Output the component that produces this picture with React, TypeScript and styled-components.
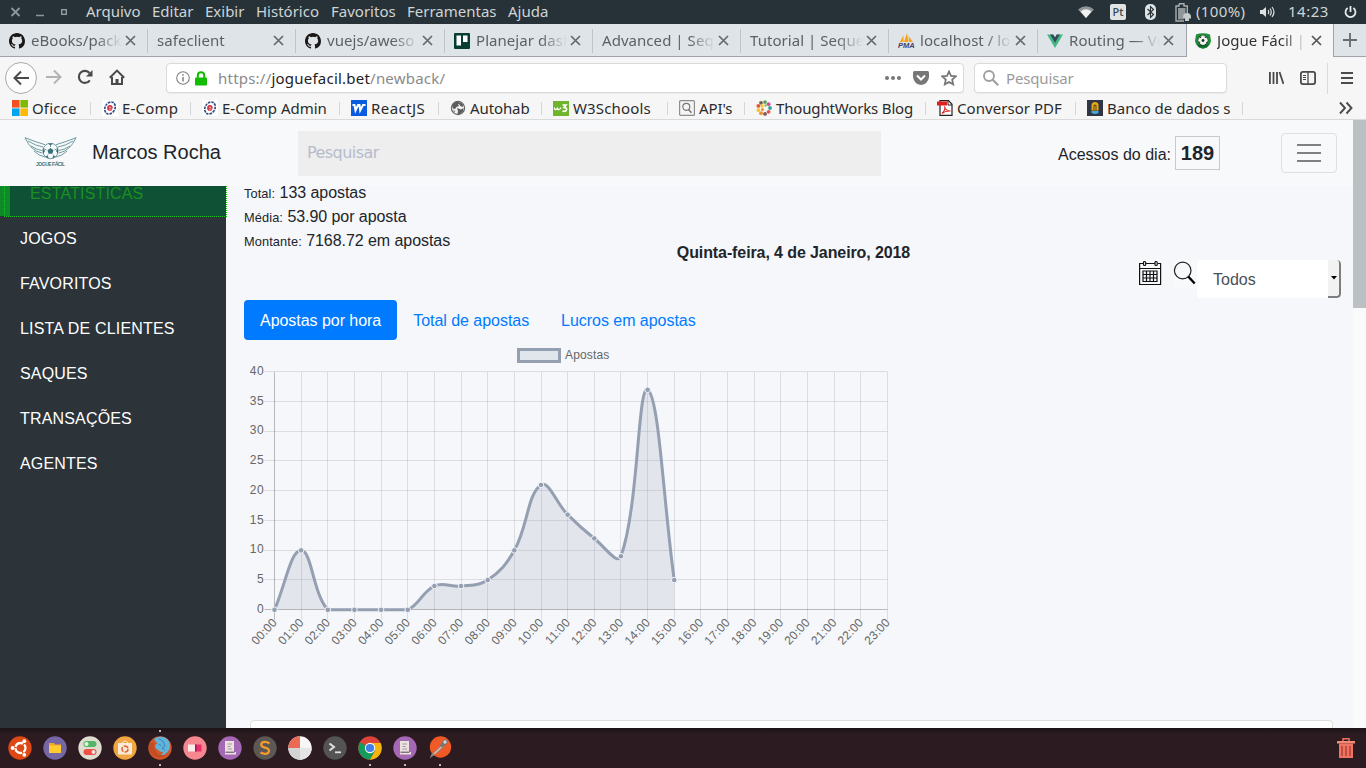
import React from 'react';
import styled, { createGlobalStyle, css } from 'styled-components';

const UI_FONT = '"Noto Sans", "Open Sans", sans-serif';
const PAGE_FONT = '"Liberation Sans", Arial, sans-serif';

const Global = createGlobalStyle`
  *, *::before, *::after { box-sizing: border-box; }
  html, body { margin: 0; padding: 0; overflow: hidden; }
  svg { display: block; flex: none; }
`;

const Screen = styled.div`
  width: 1366px;
  height: 768px;
  display: flex;
  flex-direction: column;
  overflow: hidden;
  background: #f5f7fb;
`;

/* ---------- desktop menu bar ---------- */

const MenuBar = styled.div`
  flex: none;
  height: 24px;
  display: flex;
  align-items: center;
  background: #263238;
  color: #cfd4d6;
  font: 15px/23px ${UI_FONT};
  white-space: nowrap;
`;
const WindowButtons = styled.div`
  width: 86px;
  padding-left: 10px;
`;
const MenuItem = styled.span<{ $w: number }>`
  width: ${p => p.$w}px;
  padding-bottom: 1px;
`;
const Tray = styled.div`
  margin-left: auto;
  display: flex;
  align-items: center;
  padding-right: 9px;
`;
const Gap = styled.div<{ $w: number }>`
  width: ${p => p.$w}px;
`;
const KeyboardBadge = styled.span`
  width: 16px;
  height: 16px;
  border-radius: 2px;
  background: #dfe3e4;
  color: #39464c;
  font: 500 11px/16px ${UI_FONT};
  text-align: center;
`;
const TrayText = styled.span<{ $w: number; $ls?: number }>`
  width: ${p => p.$w}px;
  padding-bottom: 1px;
  letter-spacing: ${p => p.$ls ?? 0}px;
`;

/* ---------- browser tabs ---------- */

const TabStrip = styled.div`
  flex: none;
  height: 33px;
  display: flex;
  background: #dfe4e8;
`;
const Tab = styled.div<{ $w: number; $active?: boolean; $last?: boolean }>`
  width: ${p => p.$w}px;
  height: 33px;
  display: flex;
  align-items: center;
  padding: 0 12px 0 9px;
  border-bottom: 1px solid #9ea4a9;
  color: #5d6163;
  font: 15px/32px ${UI_FONT};
  background: linear-gradient(#bfc4c8, #bfc4c8) no-repeat right 5px / 1px 24px;
  ${p => p.$last && css`background: none;`}
  ${p => p.$active && css`
    background: #f6f6f6;
    border: solid #9ea4a9;
    border-width: 0 1px;
    color: #333;
    padding: 0 11px 1px 8px;
  `}
`;
const Favicon = styled.span`
  width: 16px;
  height: 16px;
  margin: 1px 6px 0 0;
  flex: none;
`;
const TabTitle = styled.span`
  flex: 1;
  min-width: 0;
  height: 32px;
  margin-right: 3px;
  overflow: hidden;
  white-space: nowrap;
  letter-spacing: 0.05px;
  mask-image: linear-gradient(to left, transparent 0, #000 26px);
`;
const NewTab = styled.div`
  flex: 1;
  display: flex;
  align-items: center;
  padding-left: 9px;
  border-bottom: 1px solid #9ea4a9;
`;

/* ---------- toolbar ---------- */

const Toolbar = styled.div`
  flex: none;
  height: 40px;
  display: flex;
  align-items: center;
  background: #f6f6f6;
  font: 15px/28px ${UI_FONT};
`;
const BackButton = styled.div`
  width: 32px;
  height: 32px;
  margin: 2px 8px 0 5px;
  border: 1px solid #a9a9a9;
  border-radius: 50%;
  background: #fdfdfd;
  display: flex;
  align-items: center;
  justify-content: center;
`;
const Field = styled.div<{ $w: number; $ml: number }>`
  width: ${p => p.$w}px;
  margin: 2px 0 0 ${p => p.$ml}px;
  height: 30px;
  border: 1px solid #dadada;
  border-radius: 4px;
  background: #fff;
  box-shadow: 0 1px 1px rgba(0, 0, 0, 0.05);
  display: flex;
  align-items: center;
  color: #8a8a8a;
  white-space: nowrap;
`;
const Url = styled.span`
  flex: 1;
  margin-left: 11px;
  letter-spacing: 0.22px;
  b { font-weight: 400; color: #222; }
`;
const Placeholder = styled.span`
  margin-left: 7px;
  color: #9a9a9a;
  letter-spacing: -0.15px;
`;
const ToolIcons = styled.div`
  margin-left: auto;
  display: flex;
  align-items: center;
  height: 40px;
  padding: 2px 12px 0 0;
`;
const ToolDivider = styled.div`
  width: 1px;
  height: 31px;
  margin: 0 12px 0 10px;
  background: #dadada;
`;

/* ---------- bookmarks ---------- */

const Bookmarks = styled.div`
  flex: none;
  height: 23px;
  display: flex;
  align-items: center;
  padding-left: 12px;
  background: #f6f6f6;
  border-bottom: 1px solid #d9d9d9;
  color: #2b2b2b;
  font: 15px/22px ${UI_FONT};
`;
const Bookmark = styled.div<{ $w: number }>`
  width: ${p => p.$w}px;
  display: flex;
  align-items: center;
  white-space: nowrap;
`;
const BookmarkLabel = styled.span<{ $ls: number }>`
  margin-left: 4px;
  letter-spacing: ${p => p.$ls}px;
`;
const BookmarkRule = styled.span`
  width: 1px;
  height: 13px;
  margin-left: auto;
  margin-right: 11px;
  background: #d6d6d6;
`;
const Overflow = styled.div`
  margin-left: auto;
  padding-right: 13px;
`;

/* ---------- web page ---------- */

const Viewport = styled.div`
  flex: none;
  height: 608px;
  display: flex;
  overflow: hidden;
`;
const Page = styled.div`
  width: 1353px;
  height: 608px;
  display: flex;
  flex-direction: column;
  background: #f5f7fb;
  color: #212529;
  font: 16px/24px ${PAGE_FONT};
`;
const ScrollTrack = styled.div`
  flex: 1;
  background: #fafafa;
`;
const ScrollThumb = styled.div`
  height: 188px;
  background: #bbc0c3;
`;
const Header = styled.header`
  position: relative;
  z-index: 2;
  flex: none;
  height: 66px;
  display: flex;
  align-items: center;
  padding: 0 16px 0 24px;
  background: #f8f9fb;
`;
const UserName = styled.span`
  width: 206px;
  margin-left: 15px;
  padding-bottom: 2px;
  font-size: 20px;
`;
const SearchBox = styled.div`
  width: 583px;
  height: 45px;
  padding-left: 9px;
  background: #eee;
  color: #b6bccd;
  font: 16px/43px "DejaVu Sans", sans-serif;
  letter-spacing: -0.55px;
`;
const Visits = styled.div`
  display: flex;
  align-items: center;
  margin-left: auto;
  gap: 4px;
  padding-top: 3px;
`;
const VisitCount = styled.b`
  width: 45px;
  height: 34px;
  margin-top: -3px;
  border: 1px solid #c9cacc;
  font-size: 20px;
  line-height: 32px;
  text-align: center;
`;
const Burger = styled.div`
  width: 56px;
  height: 40px;
  margin-left: 61px;
  border: 1px solid #dfe0e2;
  border-radius: 4px;
  display: flex;
  flex-direction: column;
  align-items: center;
  justify-content: center;
  gap: 6px;
  i { width: 24px; height: 2px; background: #7f8082; }
`;
const Body = styled.div`
  flex: none;
  height: 542px;
  display: flex;
`;
const Sidebar = styled.nav`
  position: relative;
  z-index: 1;
  width: 226px;
  background: #2c343a;
`;
const SideList = styled.div`
  margin-top: -15px;
  letter-spacing: 0.17px;
`;
const SideItem = styled.div<{ $active?: boolean }>`
  height: 45px;
  padding-left: 20px;
  line-height: 45px;
  color: #fff;
  ${p => p.$active && css`
    position: relative;
    border-left: 10px solid #0f8a2b;
    background: #0f5135;
    color: #1a8f22;
    &::after {
      content: '';
      position: absolute;
      inset: 0 -1px -1px -6px;
      border: 1px dotted #16c916;
    }
  `}
`;
const Main = styled.main`
  flex: 1;
  height: 542px;
  overflow: hidden;
  padding: 0 10px 0 18px;
`;
const Stats = styled.div`
  margin-top: -5px;
`;
const Stat = styled.div`
  height: 24px;
  letter-spacing: -0.06px;
  small { font-size: 12.8px; line-height: 1; letter-spacing: 0.1px; }
`;
const DateLine = styled.div`
  height: 24px;
  margin-top: -13px;
  line-height: 26px;
  text-align: center;
  font-weight: 700;
  letter-spacing: -0.1px;
`;
const Filters = styled.div`
  display: flex;
  height: 38px;
  margin: -4px 2px 2px 0;
  justify-content: flex-end;
`;
const FilterIcon = styled.span<{ $mr: number }>`
  width: 24px;
  height: 29px;
  margin-right: ${p => p.$mr}px;
  background: #f8f9fb;
`;
const Select = styled.div`
  width: 144px;
  height: 38px;
  display: flex;
  background: #fff;
  border-radius: 4px;
  overflow: hidden;
  color: #495057;
  line-height: 40px;
  padding-left: 16px;
`;
const SelectArrow = styled.span`
  margin-left: auto;
  width: 13px;
  height: 38px;
  background: #f2f2f2;
  border: solid #7d7d7d;
  border-width: 0 2px 2px 0;
  border-radius: 0 4px 4px 0;
  display: flex;
  align-items: center;
  justify-content: center;
`;
const Pills = styled.div`
  display: flex;
  letter-spacing: -0.04px;
`;
const Pill = styled.div<{ $active?: boolean }>`
  height: 40px;
  padding: 0 16px;
  line-height: 42px;
  border-radius: 4px;
  color: ${p => (p.$active ? '#fff' : '#007bff')};
  background: ${p => (p.$active ? '#007bff' : 'transparent')};
`;
const ChartFrame = styled.div`
  height: 380px;
`;
const Card = styled.div`
  height: 60px;
  margin: 0 10px 0 6px;
  border: 1px solid #dcdddf;
  border-radius: 4px;
  background: #fff;
`;

/* ---------- dock ---------- */

const Dock = styled.div`
  flex: none;
  height: 40px;
  display: flex;
  align-items: center;
  gap: 11px;
  padding: 0 8px;
  background: linear-gradient(#1c1416, #2c1b20 6px);
`;
const DockItem = styled.div<{ $run?: boolean; $focus?: boolean }>`
  height: 40px;
  display: flex;
  align-items: center;
  background-repeat: no-repeat;
  background-image: ${p => {
    const dot = 'radial-gradient(circle, #bbb 0.8px, transparent 1.5px)';
    return p.$focus ? `${dot}, ${dot}` : p.$run ? dot : 'none';
  }};
  background-size: 4px 4px;
  background-position: ${p => (p.$focus ? '10px 35px, 10px 1px' : '10px 35px')};
`;
const DockEnd = styled.div`
  margin-left: auto;
`;

/* ---------- icons ---------- */

const Close = ({ c = '#66696b' }: { c?: string }) => (
  <svg width="11" height="11" viewBox="0 0 11 11">
    <path d="M1 1l9 9M10 1l-9 9" stroke={c} strokeWidth="1.7" fill="none" />
  </svg>
);

const GitHub = () => (
  <svg width="16" height="16" viewBox="0 0 16 16">
    <path
      fill="#1b1817"
      d="M8 0C3.58 0 0 3.58 0 8c0 3.54 2.29 6.53 5.47 7.59.4.07.55-.17.55-.38 0-.19-.01-.82-.01-1.49-2.01.37-2.53-.49-2.69-.94-.09-.23-.48-.94-.82-1.13-.28-.15-.68-.52-.01-.53.63-.01 1.08.58 1.23.82.72 1.21 1.87.87 2.33.66.07-.52.28-.87.51-1.07-1.78-.2-3.64-.89-3.64-3.95 0-.87.31-1.59.82-2.15-.08-.2-.36-1.02.08-2.12 0 0 .67-.21 2.2.82a7.4 7.4 0 0 1 4 0c1.53-1.04 2.2-.82 2.2-.82.44 1.1.16 1.92.08 2.12.51.56.82 1.27.82 2.15 0 3.07-1.87 3.75-3.65 3.95.29.25.54.73.54 1.48 0 1.07-.01 1.93-.01 2.2 0 .21.15.46.55.38A8.01 8.01 0 0 0 16 8c0-4.42-3.58-8-8-8z"
    />
  </svg>
);
const Trello = () => (
  <svg width="16" height="16" viewBox="0 0 16 16">
    <rect width="16" height="16" rx="1" fill="#083d33" />
    <rect x="2.5" y="2.5" width="4.5" height="10" fill="#fff" />
    <rect x="9" y="2.5" width="4.5" height="6.5" fill="#fff" />
  </svg>
);
const Pma = () => (
  <svg width="17" height="16" viewBox="0 0 17 16">
    <path d="M2 9L5.5 2v7zM6 9l3-9 1.5 9zM11 9l-.5-6L15 9z" fill="#f7a11c" />
    <text x="0" y="15" fontFamily="Liberation Sans" fontSize="7.5" fontWeight="700" fontStyle="italic" fill="#3c3f73">PMA</text>
  </svg>
);
const Vue = () => (
  <svg width="16" height="16" viewBox="0 0 16 16">
    <path d="M0 1.5h6.2L8 4.6l1.8-3.1H16L8 15z" fill="#41b883" />
    <path d="M3.2 1.5h3L8 4.6l1.8-3.1h3L8 9.8z" fill="#35495e" />
  </svg>
);
const Ball = () => (
  <svg width="16" height="16" viewBox="0 0 16 16">
    <path d="M1 1.5Q8-1 15 1.5L16 8q-1 6-8 8Q1 14 0 8z" fill="#1f8e3a" />
    <path d="M2 10.500q6 4 12 0l-2 4H4z" fill="#126428" />
    <circle cx="8" cy="7.300" r="5.300" fill="#14351f" />
    <circle cx="8" cy="7.300" r="4.700" fill="#f2f5f2" />
    <path d="M8 5.800l1.600 1.200-.6 1.800H7l-.6-1.800zM5 3.700l1.500-.7-.5 1.700-1.500.8zM9.500 2.900l2 1.300-.2 1-1.500-.7zM3.700 8l1.500 1.500v1.300L4.200 10zM10.700 11l.5-1.600L12.500 8.200 12 10z" fill="#17321f" />
  </svg>
);
const Windows = () => (
  <svg width="16" height="16" viewBox="0 0 16 16">
    <path d="M0 0h7.6v7.6H0z" fill="#f25022" />
    <path d="M8.4 0H16v7.6H8.400z" fill="#7fba00" />
    <path d="M0 8.4h7.600V16H0z" fill="#00a4ef" />
    <path d="M8.400 8.400H16V16H8.400z" fill="#ffb900" />
  </svg>
);
const EComp = () => (
  <svg width="16" height="16" viewBox="0 0 16 16">
    <rect width="16" height="16" fill="#fff" />
    <ellipse cx="8" cy="8" rx="4.900" ry="6.300" fill="none" stroke="#2a4b86" strokeWidth="1.600" strokeDasharray="2.500 .9" transform="rotate(30 8 8)" />
    <path d="M6 8.100h4q.2-2.300-1.900-2.300-2.200.1-2.300 2.300.2 2.200 2.300 2l1.800-.5" fill="none" stroke="#d02b38" strokeWidth="1.400" />
  </svg>
);
const WSquare = () => (
  <svg width="16" height="16" viewBox="0 0 16 16">
    <rect width="16" height="16" fill="#0a5be0" />
    <path d="M1.500 5h2l1 5.500L7 5h1.500l.7 5.500L12 5h2.500" fill="none" stroke="#fff" strokeWidth="2" />
  </svg>
);
const GlobeIcon = () => (
  <svg width="16" height="16" viewBox="0 0 16 16">
    <circle cx="8" cy="8" r="6.600" fill="#f1f1f1" stroke="#666" strokeWidth="1.200" />
    <path d="M2 6q1.500-4 6-4.500L10 3 8 4.500 9 6 6.500 7 5 9 3 8.500zM10 2l3.500 3-1 2-2-1-1.500-2zM7 8l4 1.500 2.500-1.500-.5 3.500-3 2.500H7.500L8 11zM3 10l2 1-.5 1.500z" fill="#5c5c5c" />
  </svg>
);
const W3 = () => (
  <svg width="16" height="15" viewBox="0 0 16 15">
    <rect width="16" height="15" fill="#6fb52c" />
    <path d="M1.300 6.500q.3 2.500 1.800 2t1.400-2q.2 2.500 1.700 2T7.800 6.500" fill="none" stroke="#fff" strokeWidth="1.300" />
    <path d="M9.500 4H13l-2 2.500q3 0 2.500 2.500-.8 2-4 1" fill="none" stroke="#fff" strokeWidth="1.700" />
  </svg>
);
const ApiIcon = () => (
  <svg width="16" height="16" viewBox="0 0 16 16">
    <rect x=".6" y=".6" width="14.800" height="14.800" rx="1" fill="#f5f5f5" stroke="#8d8d8d" strokeWidth="1.200" />
    <circle cx="7.300" cy="6.800" r="3.500" fill="none" stroke="#777" strokeWidth="1.200" />
    <path d="M9.500 9.500l3 3.200" stroke="#777" strokeWidth="1.600" />
  </svg>
);
const Thought = () => (
  <svg width="16" height="16" viewBox="0 0 16 16">
    {['#2fa39a', '#e0564a', '#7c5b4c', '#f08c2e', '#f3c42e', '#e8543f', '#7c5b4c', '#54a85b', '#d64a9a'].map((c, i) => {
      const a = (i / 9) * Math.PI * 2;
      return <circle key={i} cx={8 + Math.cos(a) * 6} cy={8 + Math.sin(a) * 6} r="1.900" fill={c} />;
    })}
    <circle cx="6" cy="6" r="1.700" fill="#f3c42e" />
    <circle cx="9.500" cy="5.500" r="1.200" fill="#8bc34a" />
    <circle cx="6.500" cy="9.500" r="1.500" fill="#ef8a3a" />
  </svg>
);
const Pdf = () => (
  <svg width="16" height="16" viewBox="0 0 16 16">
    <path d="M3 .7h8.500l3.500 3.600v11H3z" fill="#fff" stroke="#222" strokeWidth="1.200" />
    <path d="M11 .7V5h4" fill="none" stroke="#222" />
    <rect y="1.500" width="10" height="4" fill="#e01f1f" />
    <path d="M5 13.500q4-4 2.500-7 1 4.500 6 4.500-5-.5-8.500 2.500z" fill="none" stroke="#d22" strokeWidth="1.100" />
  </svg>
);
const Bank = () => (
  <svg width="16" height="16" viewBox="0 0 16 16">
    <rect width="16" height="16" fill="#2f3747" />
    <path d="M4.500 10.500V5.500q0-3.500 3.500-3.500t3.500 3.500v5z" fill="#e8a913" />
    <path d="M6.500 10.500V5.500q1.500-2 3 0v5h-1V6h-1v4.500z" fill="#5b4a21" />
    <path d="M4.500 11h7v2q-3.500 2-7 0z" fill="#4aa6d8" />
  </svg>
);

/* ---------- chart ---------- */

const HOURS = Array.from({ length: 24 }, (_, i) => `${String(i).padStart(2, '0')}:00`);
const BETS = [0, 10, 0, 0, 0, 0, 4, 4, 5, 10, 21, 16, 12, 9, 37, 5];
const LEFT = 30.5;
const TOP = 32;
const BOTTOM = 269.8;
const STEP = 26.65;
const px = (i: number) => LEFT + i * STEP;
const py = (v: number) => BOTTOM - (v * (BOTTOM - TOP)) / 40;
const snap = (n: number) => Math.floor(n) + 0.5;

function smoothPath() {
  const pts = BETS.map((v, i) => ({ x: px(i), y: py(v) }));
  const cap = (y: number) => Math.min(BOTTOM, Math.max(TOP, y));
  const ctrl = pts.map((p, i) => {
    const a = pts[i - 1] ?? p;
    const b = pts[i + 1] ?? p;
    const d0 = Math.hypot(p.x - a.x, p.y - a.y);
    const d1 = Math.hypot(b.x - p.x, b.y - p.y);
    const f0 = (0.4 * d0) / (d0 + d1);
    const f1 = (0.4 * d1) / (d0 + d1);
    return {
      px: p.x - f0 * (b.x - a.x),
      py: cap(p.y - f0 * (b.y - a.y)),
      nx: p.x + f1 * (b.x - a.x),
      ny: cap(p.y + f1 * (b.y - a.y)),
    };
  });
  let d = `M${pts[0].x} ${pts[0].y}`;
  for (let i = 1; i < pts.length; i++) {
    d += `C${ctrl[i - 1].nx} ${ctrl[i - 1].ny} ${ctrl[i].px} ${ctrl[i].py} ${pts[i].x} ${pts[i].y}`;
  }
  return d;
}

const ChartText = styled.text<{ $ls?: number }>`
  font: 12px ${PAGE_FONT};
  letter-spacing: ${p => p.$ls ?? 0}px;
  fill: #666;
`;

function Chart() {
  const line = smoothPath();
  return (
    <svg width="660" height="320" viewBox="0 0 660 320">
      <rect x="274.500" y="9.500" width="41" height="12" fill="#e1e5ec" stroke="#949fb1" strokeWidth="3" />
      <ChartText x="321" y="19" $ls={0.15}>Apostas</ChartText>
      {HOURS.map((h, i) => (
        <g key={h}>
          <line x1={snap(px(i))} x2={snap(px(i))} y1={TOP} y2={BOTTOM + 10} stroke="#000" strokeOpacity={i ? 0.1 : 0.25} />
          <ChartText $ls={0.2} textAnchor="end" transform={`translate(${px(i) - 1.9} ${BOTTOM + 8.3}) rotate(-47)`} x="0" y="7">{h}</ChartText>
        </g>
      ))}
      {[0, 5, 10, 15, 20, 25, 30, 35, 40].map(v => (
        <g key={v}>
          <line x1={LEFT - 10} x2={px(23)} y1={snap(py(v) - 0.3)} y2={snap(py(v) - 0.3)} stroke="#000" strokeOpacity={v ? 0.1 : 0.25} />
          <ChartText $ls={0.4} textAnchor="end" x="20" y={py(v) + 3}>{v}</ChartText>
        </g>
      ))}
      <path d={`${line}V${BOTTOM}H${LEFT}Z`} fill="#949fb1" fillOpacity="0.2" />
      <path d={line} fill="none" stroke="#949fb1" strokeWidth="3" />
      {BETS.map((v, i) => (
        <circle key={i} cx={px(i)} cy={py(v)} r="2.800" fill="#949fb1" stroke="#f4f6fa" strokeWidth="1" />
      ))}
    </svg>
  );
}

/* ---------- dock drawings ---------- */

const Disc = ({ fill, children }: { fill: string; children?: React.ReactNode }) => (
  <svg width="24" height="24" viewBox="0 0 24 24">
    <circle cx="12" cy="12" r="11.700" fill={fill} />
    {children}
  </svg>
);
const Script = () => (
  <Disc fill="#a468b5">
    <path d="M7 5h9v11h2v2.500H7z" fill="#e9e3dc" />
    <path d="M9.500 8h4.500M9.500 10.500h3M9.500 13h4.500" stroke="#a596a5" strokeWidth="1.200" />
    <path d="M7.500 16.200h9" stroke="#5e3c68" />
  </Disc>
);

const DOCK: { run?: boolean; focus?: boolean; icon: React.ReactNode }[] = [
  { icon: (
    <Disc fill="#dd4814">
      <circle cx="12.500" cy="12" r="5" fill="none" stroke="#fff" strokeWidth="2.300" strokeDasharray="9.200 1.270" strokeDashoffset="4.500" />
      <circle cx="4.600" cy="12" r="1.900" fill="#fff" /><circle cx="16.300" cy="5.200" r="1.900" fill="#fff" /><circle cx="16.300" cy="18.800" r="1.900" fill="#fff" />
    </Disc>) },
  { icon: (
    <Disc fill="#7467a3">
      <path d="M6 7h5l1 1.500h6V17H6z" fill="#f0a92a" /><path d="M6 9.500h12V17H6z" fill="#ffcb2f" />
    </Disc>) },
  { icon: (
    <Disc fill="#deddcf">
      <rect x="5.500" y="5" width="13" height="6" rx="3" fill="#54b567" /><circle cx="8.500" cy="8" r="2" fill="#e9f1e4" />
      <rect x="5.500" y="13" width="13" height="6" rx="3" fill="#ee5046" /><circle cx="15.500" cy="16" r="2" fill="#f7e3dc" />
    </Disc>) },
  { icon: (
    <Disc fill="#f2a640">
      <path d="M5 7h14v11.500H5z" fill="#f8ead8" /><path d="M9 7q3-4 6 0" fill="none" stroke="#f8ead8" />
      <circle cx="12" cy="13" r="3" fill="none" stroke="#e0622d" strokeWidth="1.500" strokeDasharray="5 1.280" />
    </Disc>) },
  { focus: true, icon: (
    <Disc fill="#d2572b">
      <path d="M6 3Q9 .3 14 .8q7 1.200 8 8 0 6-4 8.500-3 3-8 3 5-2 5-4.500-4 .5-5-2-3-1-3-4 1-2 2.500-2Q8 6 6 3z" fill="#62b5da" />
      <path d="M11 3l4 2 2 5-3 2 3 2M10.500 8.500l3 1" fill="none" stroke="#3a86b8" strokeWidth="1" />
      <path d="M1 8q-1 8 5 12 7 4 12-1-8 1-10-3Q6 11 6 7 3 6 1 8z" fill="#c44c22" />
    </Disc>) },
  { icon: (
    <Disc fill="#f58790">
      <path d="M5 8.500h7v7H5z" fill="#f7ecea" /><path d="M12 8.500h6.500v7H12z" fill="#ea2c6d" /><path d="M12 8.500h1.500v7H12z" fill="#9b1e4b" />
    </Disc>) },
  { icon: <Script /> },
  { icon: (
    <Disc fill="#5c5853">
      <path d="M16.500 7.500Q12 4.500 8.700 7q-1.400 3.300 2.300 4.300l2.500.8q3.600 1.300 2 4.500-3.200 2.500-8 0" fill="none" stroke="#f79a2c" strokeWidth="2.300" />
    </Disc>) },
  { icon: (
    <Disc fill="#f6f6f6">
      <path d="M12 12V.3A11.700 11.700 0 0 0 .3 12z" fill="#ec6a53" /><path d="M12 12H.3A11.700 11.700 0 0 0 12 23.700z" fill="#d3d3d3" />
      <path d="M12 12v11.700A11.700 11.700 0 0 0 23.700 12z" fill="#e5e5e5" />
    </Disc>) },
  { icon: (
    <Disc fill="#545454">
      <path d="M6.500 7.500L11 11l-4.500 3.500" fill="none" stroke="#e0e0e0" strokeWidth="2" /><path d="M12 16.300h6" stroke="#e0e0e0" strokeWidth="1.800" />
    </Disc>) },
  { run: true, icon: (
    <Disc fill="#dc4437">
      <path d="M12 12L1.900 6.200A11.700 11.700 0 0 0 12 23.700l5-8.700z" fill="#149c5a" />
      <path d="M12 7h10.600A11.700 11.700 0 0 1 12 23.700l5-9z" fill="#f4b60d" />
      <circle cx="12" cy="12" r="5.200" fill="#f4f4f4" /><circle cx="12" cy="12" r="4.100" fill="#3f7fe8" />
    </Disc>) },
  { run: true, icon: <Script /> },
  { run: true, icon: (
    <svg width="24" height="24" viewBox="0 0 24 24">
      <circle cx="12.500" cy="11" r="10.700" fill="#f15a24" />
      <path d="M1.500 22.500l2-4.500 10-9 3 2-10 8z" fill="#8f8480" />
      <path d="M6 18l8-7.500" stroke="#e8b8a0" strokeWidth="1.500" fill="none" />
      <path d="M13 10.500l4-4" stroke="#777" strokeWidth="3.500" />
      <circle cx="17" cy="6" r="2.300" fill="#d5d5d5" stroke="#6c6c6c" />
    </svg>) },
];

/* ---------- data ---------- */

const MENU: [string, number][] = [
  ['Arquivo', 66], ['Editar', 53], ['Exibir', 51], ['Histórico', 75], ['Favoritos', 76], ['Ferramentas', 101], ['Ajuda', 60],
];
const TABS: { t: string; w: number; icon?: React.ReactNode }[] = [
  { t: 'eBooks/pack', w: 148, icon: <GitHub /> },
  { t: 'safeclient', w: 148 },
  { t: 'vuejs/aweso', w: 149, icon: <GitHub /> },
  { t: 'Planejar dash', w: 148, icon: <Trello /> },
  { t: 'Advanced | Sequ', w: 148 },
  { t: 'Tutorial | Seque', w: 148 },
  { t: 'localhost / lo', w: 149, icon: <Pma /> },
  { t: 'Routing — Vu', w: 148, icon: <Vue /> },
];
const MARKS: [string, number, number, React.ReactNode][] = [
  ['Oficce', 90, 0.15, <Windows />],
  ['E-Comp', 100, 0.2, <EComp />],
  ['E-Comp Admin', 149, 0, <EComp />],
  ['ReactJS', 99, 0.45, <WSquare />],
  ['Autohab', 103, -0.1, <GlobeIcon />],
  ['W3Schools', 126, 0.15, <W3 />],
  ["API's", 77, -0.1, <ApiIcon />],
  ['ThoughtWorks Blog', 181, -0.16, <Thought />],
  ['Conversor PDF', 150, 0.05, <Pdf />],
  ['Banco de dados s', 167, 0, <Bank />],
];
const SIDE = ['JOGOS', 'FAVORITOS', 'LISTA DE CLIENTES', 'SAQUES', 'TRANSAÇÕES', 'AGENTES'];

export default function App() {
  return (
    <Screen>
      <Global />
      <MenuBar>
        <WindowButtons>
          <svg width="60" height="14" viewBox="0 0 60 14">
            <path d="M1.500 3l8 8M9.500 3l-8 8" stroke="#8f979a" strokeWidth="1.800" />
            <path d="M26 10.500h8" stroke="#8f979a" strokeWidth="1.500" />
            <rect x="51.700" y="4.700" width="4.600" height="4.600" fill="none" stroke="#8f979a" strokeWidth="1.500" />
          </svg>
        </WindowButtons>
        {MENU.map(([t, w]) => <MenuItem key={t} $w={w}>{t}</MenuItem>)}
        <Tray>
          <svg width="16" height="12" viewBox="0 0 16 12"><path d="M0 3.500Q8-3 16 3.500L8 12z" fill="#8d9598" /><path d="M2.500 5.500Q8 1 13.500 5.500L8 12z" fill="#f0f2f2" /></svg>
          <Gap $w={16} />
          <KeyboardBadge>Pt</KeyboardBadge>
          <Gap $w={19} />
          <svg width="11" height="16" viewBox="0 0 11 16"><rect width="11" height="16" rx="5" fill="#dfe3e4" /><path d="M2.500 5l6 5.500-3 3v-11l3 3-6 5.500" fill="none" stroke="#263238" strokeWidth="1.100" /></svg>
          <Gap $w={19} />
          <svg width="17" height="19" viewBox="0 0 17 19"><path d="M4 .8h5V3h3.300v7M9 18H1V3h3V.8" fill="none" stroke="#a9b0b2" strokeWidth="1.400" /><path d="M3 5h7.500v7l-2 1v3.500H3z" fill="#8f979a" /><path d="M8 14q0-4 4-4t4 4v1.500h-2V18h-4v-2.500H8z" fill="#c6cbcc" /></svg>
          <Gap $w={4} />
          <TrayText $w={64} $ls={0.35}>(100%)</TrayText>
          <svg width="15" height="12" viewBox="0 0 15 12"><path d="M0 4h2.500L6 1v10L2.500 8H0z" fill="#dfe3e4" /><path d="M8 4q1.500 2 0 4M10 2.500q2.500 3.500 0 7M12 1q4 5 0 10" fill="none" stroke="#dfe3e4" strokeWidth="1.200" /></svg>
          <Gap $w={13} />
          <TrayText $w={56} $ls={0.5}>14:23</TrayText>
          <svg width="13" height="14" viewBox="0 0 13 14"><path d="M3.700 3a5 5 0 1 0 5.600 0M6.500 1v6" fill="none" stroke="#e6e9ea" strokeWidth="1.800" /></svg>
        </Tray>
      </MenuBar>

      <TabStrip>
        {TABS.map((t, i) => (
          <Tab key={i} $w={t.w} $last={i === TABS.length - 1}>
            {t.icon && <Favicon>{t.icon}</Favicon>}
            <TabTitle>{t.t}</TabTitle>
            <Close />
          </Tab>
        ))}
        <Tab $w={148} $active>
          <Favicon><Ball /></Favicon>
          <TabTitle>Jogue Fácil |</TabTitle>
          <Close c="#555" />
        </Tab>
        <NewTab>
          <svg width="14" height="14" viewBox="0 0 14 14"><path d="M7 0v14M0 7h14" stroke="#666b6f" strokeWidth="1.800" /></svg>
        </NewTab>
      </TabStrip>

      <Toolbar>
        <BackButton>
          <svg width="17" height="16" viewBox="0 0 17 16"><path d="M8 1.500L1.500 8 8 14.500M1.500 8H16" fill="none" stroke="#4a4a4a" strokeWidth="2" /></svg>
        </BackButton>
        <svg width="17" height="16" viewBox="0 0 17 16"><path d="M9 1.500L15.500 8 9 14.500M15.500 8H1" fill="none" stroke="#b3b3b3" strokeWidth="2" /></svg>
        <Gap $w={15} />
        <svg width="16" height="16" viewBox="0 0 16 16"><path d="M12.800 11.300A6 6 0 1 1 12.500 4" fill="none" stroke="#4a4a4a" strokeWidth="2.100" /><path d="M15.500 1v6.500H9z" fill="#4a4a4a" /></svg>
        <Gap $w={16} />
        <svg width="16" height="16" viewBox="0 0 16 16"><path d="M.8 8.800L8 1.600l7.200 7.200M3 8v7h10V8" fill="none" stroke="#4a4a4a" strokeWidth="2" /><path d="M6.500 15v-5h3v5" fill="#4a4a4a" /></svg>
        <Field $w={798} $ml={41}>
          <Gap $w={9} />
          <svg width="14" height="14" viewBox="0 0 14 14"><circle cx="7" cy="7" r="6.300" fill="none" stroke="#808080" strokeWidth="1.100" /><path d="M7 6v4.500M7 3.300v1.400" stroke="#808080" strokeWidth="1.500" /></svg>
          <Gap $w={5} />
          <svg width="12" height="15" viewBox="0 0 12 15"><path d="M2.800 8V4.500q0-3.200 3.200-3.200t3.200 3.200V8" fill="none" stroke="#12bc00" strokeWidth="2" /><rect y="6.500" width="12" height="8" rx="1" fill="#12bc00" /></svg>
          <Url>https://<b>joguefacil.bet</b>/newback/</Url>
          <svg width="16" height="6" viewBox="0 0 16 6"><circle cx="2" cy="3" r="2" fill="#777" /><circle cx="8" cy="3" r="2" fill="#777" /><circle cx="14" cy="3" r="2" fill="#777" /></svg>
          <Gap $w={12} />
          <svg width="16" height="14" viewBox="0 0 16 14"><path d="M1.500 0h13Q16 0 16 1.500V6q-1 7-8 8-7-1-8-8V1.500Q0 0 1.500 0z" fill="#777" /><path d="M4 4.500l4 4 4-4" fill="none" stroke="#fff" strokeWidth="2" /></svg>
          <Gap $w={12} />
          <svg width="16" height="16" viewBox="0 0 16 16"><path d="M8 1.500l2 4.400 4.800.5-3.600 3.200 1 4.800L8 12l-4.200 2.400 1-4.800L1.200 6.400 6 5.900z" fill="none" stroke="#777" strokeWidth="1.800" /></svg>
          <Gap $w={6} />
        </Field>
        <Field $w={253} $ml={10}>
          <Gap $w={8} />
          <svg width="16" height="16" viewBox="0 0 16 16"><circle cx="6" cy="6" r="5" fill="none" stroke="#a0a0a0" strokeWidth="1.900" /><path d="M9.700 9.700l5.500 5.500" stroke="#a0a0a0" strokeWidth="2.200" /></svg>
          <Placeholder>Pesquisar</Placeholder>
        </Field>
        <ToolIcons>
          <svg width="16" height="14" viewBox="0 0 16 14"><path d="M1.900 1v12M5.500 1v12M9 1v12M11.500 1l4 12" stroke="#4a4a4a" strokeWidth="1.800" /></svg>
          <Gap $w={16} />
          <svg width="16" height="14" viewBox="0 0 16 14"><rect x=".9" y=".9" width="14.200" height="12.200" rx="2" fill="none" stroke="#4a4a4a" strokeWidth="1.800" /><path d="M8 1v12" stroke="#4a4a4a" strokeWidth="1.300" /><path d="M3 4.500h3M3 6.500h3M3 8.500h3" stroke="#4a4a4a" /></svg>
          <Gap $w={1} />
          <ToolDivider />
          <svg width="14" height="14" viewBox="0 0 14 14"><path d="M1 2h12M1 7h12M1 12h12" stroke="#4a4a4a" strokeWidth="1.800" /></svg>
        </ToolIcons>
      </Toolbar>

      <Bookmarks>
        {MARKS.map(([t, w, ls, icon]) => (
          <Bookmark key={t} $w={w}>
            {icon}
            <BookmarkLabel $ls={ls}>{t}</BookmarkLabel>
            <BookmarkRule />
          </Bookmark>
        ))}
        <Overflow>
          <svg width="14" height="14" viewBox="0 0 14 14"><path d="M1 1.500L6 7l-5 5.500M7.500 1.500l5 5.500-5 5.500" fill="none" stroke="#4a4a4a" strokeWidth="1.900" /></svg>
        </Overflow>
      </Bookmarks>

      <Viewport>
        <Page>
          <Header>
            <svg width="53" height="32" viewBox="0 0 53 32">
              <g fill="none" stroke="#5f9095" strokeWidth=".9">
                <path d="M1 .7q10 4 20 7M1 .7Q7 14 18 16M4 4q8 5 15 6M7 9q6 4 11 4.500M10 14q5 5 11 6" />
                <path d="M52 .7q-10 4-20 7M52 .7Q46 14 35 16M49 4q-8 5-15 6M46 9q-6 4-11 4.500M43 14q-5 5-11 6" />
                <circle cx="26.500" cy="14" r="7.700" />
                <path d="M26.500 10v-3M22.500 13l-3-1.500M30.500 13l3-1.500M24 17.500l-2 3M29 17.500l2 3" />
              </g>
              <path d="M26.500 11l3 2.200-1.100 3.500h-3.800l-1.100-3.500zM24 6.500h5l-2.500 2zM19 11l2 3-2 3zM34 11l-2 3 2 3zM21 19.500l3-.5.500 2.500zM32 19.500l-3-.5-.5 2.500z" fill="#3a7078" />
              <text x="26.500" y="28.800" textAnchor="middle" textLength="29" fontFamily="Liberation Sans, sans-serif" fontSize="5" fontWeight="700" fill="#3f767d">JOGUE FÁCIL</text>
            </svg>
            <UserName>Marcos Rocha</UserName>
            <SearchBox>Pesquisar</SearchBox>
            <Visits>Acessos do dia: <VisitCount>189</VisitCount></Visits>
            <Burger><i /><i /><i /></Burger>
          </Header>
          <Body>
            <Sidebar>
              <SideList>
                <SideItem $active>ESTATISTICAS</SideItem>
                {SIDE.map(s => <SideItem key={s}>{s}</SideItem>)}
              </SideList>
            </Sidebar>
            <Main>
              <Stats>
                <Stat><small>Total:</small> 133 apostas</Stat>
                <Stat><small>Média:</small> 53.90 por aposta</Stat>
                <Stat><small>Montante:</small> 7168.72 em apostas</Stat>
              </Stats>
              <DateLine>Quinta-feira, 4 de Janeiro, 2018</DateLine>
              <Filters>
                <FilterIcon $mr={11}>
                  <svg width="24" height="26" viewBox="0 0 24 26">
                    <g fill="none" stroke="#111" strokeWidth="1.200">
                      <path d="M5 3.500H1.600v21h21v-21H20M8 3.500h9M1.600 8.500h21" />
                      <rect x="5.500" y="1.500" width="2.200" height="4" rx="1" /><rect x="17" y="1.500" width="2.200" height="4" rx="1" />
                      <path d="M5 11h14v10.500H5zM5 14.500h14M5 18h14M8.500 11v10.500M12 11v10.500M15.500 11v10.500" />
                    </g>
                  </svg>
                </FilterIcon>
                <FilterIcon $mr={0}>
                  <svg width="24" height="26" viewBox="0 0 24 26"><circle cx="9.700" cy="10.500" r="8.300" fill="none" stroke="#222" strokeWidth="1.200" /><path d="M15.200 16.500l6.500 7" stroke="#000" strokeWidth="2.400" /></svg>
                </FilterIcon>
                <Select>
                  Todos
                  <SelectArrow><svg width="6" height="4" viewBox="0 0 6 4"><path d="M0 0h6L3 3.500z" fill="#000" /></svg></SelectArrow>
                </Select>
              </Filters>
              <Pills>
                <Pill $active>Apostas por hora</Pill>
                <Pill>Total de apostas</Pill>
                <Pill>Lucros em apostas</Pill>
              </Pills>
              <ChartFrame><Chart /></ChartFrame>
              <Card />
            </Main>
          </Body>
        </Page>
        <ScrollTrack><ScrollThumb /></ScrollTrack>
      </Viewport>

      <Dock>
        {DOCK.map((d, i) => <DockItem key={i} $run={d.run} $focus={d.focus}>{d.icon}</DockItem>)}
        <DockEnd>
          <svg width="24" height="24" viewBox="0 0 24 24">
            <path d="M9 5V2.700h6V5" fill="none" stroke="#ef6f5c" strokeWidth="1.500" />
            <path d="M3 5h18v2.500H3z" fill="#f58a76" /><path d="M5 7.500h14V22H5z" fill="#ef7562" />
            <path d="M8 10v10M12 10v10M16 10v10" stroke="#b84a40" strokeWidth="1.800" />
          </svg>
        </DockEnd>
      </Dock>
    </Screen>
  );
}
